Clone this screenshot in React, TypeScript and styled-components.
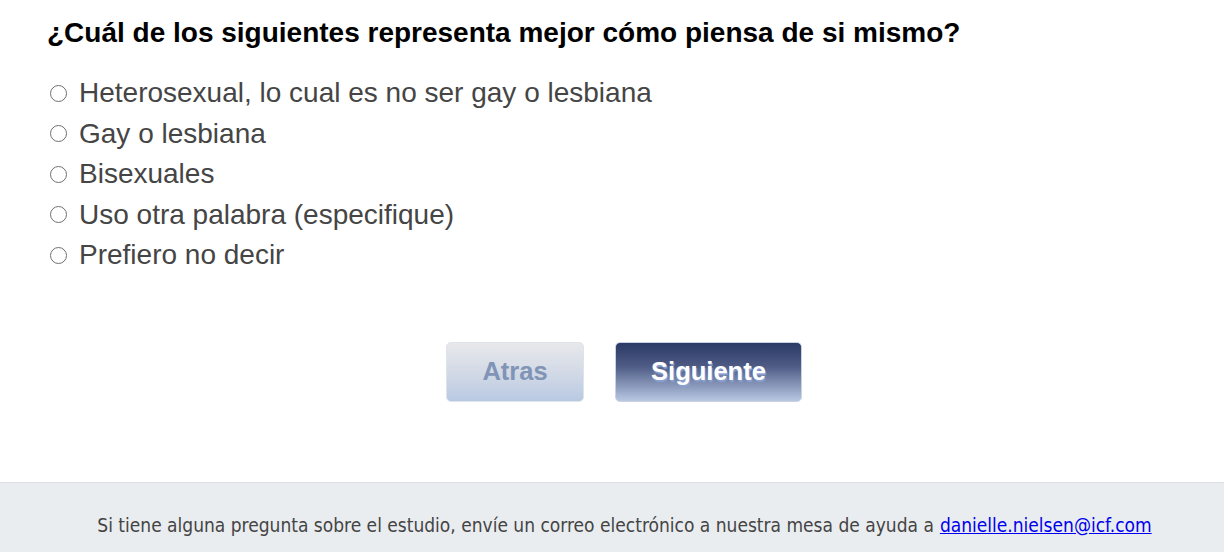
import React from "react";
import styled, { createGlobalStyle } from "styled-components";

const Global = createGlobalStyle`
  html, body { margin: 0; padding: 0; background: #ffffff; }
  body { font-family: "Liberation Sans", Arial, sans-serif; }
`;

const Page = styled.div`
  display: flex;
  flex-direction: column;
  min-height: 552px;
`;

const Main = styled.main`
  flex: 1;
  padding: 17px 0 0 47px;
`;

const Question = styled.h1`
  margin: 0 0 24px;
  font-size: 28px;
  font-weight: bold;
  color: #000;
  line-height: 32px;
`;

const Options = styled.div`
  display: flex;
  flex-direction: column;
`;

const Option = styled.label`
  display: flex;
  align-items: center;
  height: 40.5px;
  font-size: 28px;
  color: #454545;
  cursor: pointer;
`;

const Radio = styled.span`
  box-sizing: border-box;
  width: 17px;
  height: 17px;
  border: 1.3px solid #6f6f6f;
  border-radius: 50%;
  margin: 0 12px 0 3px;
  flex: none;
`;

const Buttons = styled.div`
  display: flex;
  justify-content: center;
  gap: 31px;
  margin: 66px 0 0 -23px;
`;

const NavButton = styled.button<{ $primary?: boolean }>`
  box-sizing: border-box;
  height: 60px;
  width: ${(p) => (p.$primary ? "187px" : "138px")};
  border-radius: 5px;
  border: 1px solid ${(p) => (p.$primary ? "#c9d2e0" : "#dfe3ea")};
  font-family: "Liberation Sans", Arial, sans-serif;
  font-weight: bold;
  font-size: 25.5px;
  background: ${(p) =>
    p.$primary
      ? "linear-gradient(to bottom, #2b3965 0%, #4d5b85 40%, #b8c8e3 100%)"
      : "linear-gradient(to bottom, #e7e8eb 0%, #d3dae6 50%, #b9c9e3 100%)"};
  color: ${(p) => (p.$primary ? "#ffffff" : "#8094b6")};
  text-shadow: ${(p) => (p.$primary ? "1px 2px 1px #8aa0d0" : "none")};
  padding: 0;
`;

const Footer = styled.footer`
  background: #eaedf0;
  border-top: 1px solid #dce0e5;
  height: 70px;
  box-sizing: border-box;
  display: flex;
  align-items: flex-start;
  justify-content: center;
  padding: 31px 0 0 25px;
  font-family: "DejaVu Sans Condensed", "DejaVu Sans", sans-serif;
  font-size: 19px;
  line-height: 22px;
  color: #444;
`;

const Mail = styled.a`
  color: #0000ee;
  margin-left: 6px;
`;

const options = [
  "Heterosexual, lo cual es no ser gay o lesbiana",
  "Gay o lesbiana",
  "Bisexuales",
  "Uso otra palabra (especifique)",
  "Prefiero no decir",
];

export default function App() {
  return (
    <Page>
      <Global />
      <Main>
        <Question>¿Cuál de los siguientes representa mejor cómo piensa de si mismo?</Question>
        <Options>
          {options.map((o) => (
            <Option key={o}>
              <Radio />
              {o}
            </Option>
          ))}
        </Options>
        <Buttons>
          <NavButton>Atras</NavButton>
          <NavButton $primary>Siguiente</NavButton>
        </Buttons>
      </Main>
      <Footer>
        Si tiene alguna pregunta sobre el estudio, envíe un correo electrónico a nuestra mesa de ayuda a
        <Mail href="#">danielle.nielsen@icf.com</Mail>
      </Footer>
    </Page>
  );
}
